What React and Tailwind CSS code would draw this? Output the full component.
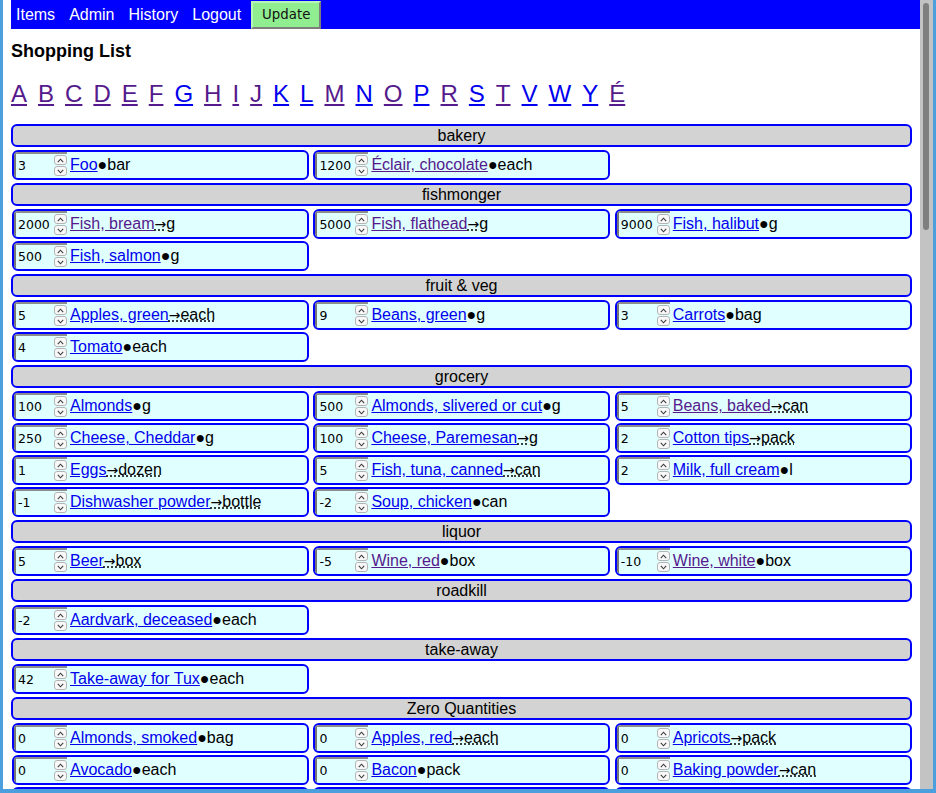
const sections = [
  {
    name: 'bakery',
    items: [
      { q: '3', name: 'Foo', unit: 'bar', arrow: false, visited: false },
      { q: '1200', name: 'Éclair, chocolate', unit: 'each', arrow: false, visited: true },
    ],
  },
  {
    name: 'fishmonger',
    items: [
      { q: '2000', name: 'Fish, bream', unit: 'g', arrow: true, visited: true },
      { q: '5000', name: 'Fish, flathead', unit: 'g', arrow: true, visited: true },
      { q: '9000', name: 'Fish, halibut', unit: 'g', arrow: false, visited: false },
      { q: '500', name: 'Fish, salmon', unit: 'g', arrow: false, visited: false },
    ],
  },
  {
    name: 'fruit & veg',
    items: [
      { q: '5', name: 'Apples, green', unit: 'each', arrow: true, visited: false },
      { q: '9', name: 'Beans, green', unit: 'g', arrow: false, visited: false },
      { q: '3', name: 'Carrots', unit: 'bag', arrow: false, visited: false },
      { q: '4', name: 'Tomato', unit: 'each', arrow: false, visited: false },
    ],
  },
  {
    name: 'grocery',
    items: [
      { q: '100', name: 'Almonds', unit: 'g', arrow: false, visited: false },
      { q: '500', name: 'Almonds, slivered or cut', unit: 'g', arrow: false, visited: false },
      { q: '5', name: 'Beans, baked', unit: 'can', arrow: true, visited: true },
      { q: '250', name: 'Cheese, Cheddar', unit: 'g', arrow: false, visited: false },
      { q: '100', name: 'Cheese, Paremesan', unit: 'g', arrow: true, visited: false },
      { q: '2', name: 'Cotton tips', unit: 'pack', arrow: true, visited: false },
      { q: '1', name: 'Eggs', unit: 'dozen', arrow: true, visited: false },
      { q: '5', name: 'Fish, tuna, canned', unit: 'can', arrow: true, visited: false },
      { q: '2', name: 'Milk, full cream', unit: 'l', arrow: false, visited: false },
      { q: '-1', name: 'Dishwasher powder', unit: 'bottle', arrow: true, visited: false },
      { q: '-2', name: 'Soup, chicken', unit: 'can', arrow: false, visited: false },
    ],
  },
  {
    name: 'liquor',
    items: [
      { q: '5', name: 'Beer', unit: 'box', arrow: true, visited: false },
      { q: '-5', name: 'Wine, red', unit: 'box', arrow: false, visited: true },
      { q: '-10', name: 'Wine, white', unit: 'box', arrow: false, visited: true },
    ],
  },
  {
    name: 'roadkill',
    items: [{ q: '-2', name: 'Aardvark, deceased', unit: 'each', arrow: false, visited: false }],
  },
  {
    name: 'take-away',
    items: [{ q: '42', name: 'Take-away for Tux', unit: 'each', arrow: false, visited: false }],
  },
  {
    name: 'Zero Quantities',
    items: [
      { q: '0', name: 'Almonds, smoked', unit: 'bag', arrow: false, visited: false },
      { q: '0', name: 'Apples, red', unit: 'each', arrow: true, visited: false },
      { q: '0', name: 'Apricots', unit: 'pack', arrow: true, visited: false },
      { q: '0', name: 'Avocado', unit: 'each', arrow: false, visited: false },
      { q: '0', name: 'Bacon', unit: 'pack', arrow: false, visited: false },
      { q: '0', name: 'Baking powder', unit: 'can', arrow: true, visited: false },
      { q: '0', name: 'Bananas', unit: 'each', arrow: false, visited: false },
      { q: '0', name: 'Basil', unit: 'bunch', arrow: false, visited: false },
      { q: '0', name: 'Bay leaves', unit: 'pack', arrow: true, visited: false },
    ],
  },
];

// visited letters show in purple
const letters = [
  ['A', true], ['B', true], ['C', true], ['D', true], ['E', true], ['F', true],
  ['G', false], ['H', true], ['I', true], ['J', true], ['K', false], ['L', false],
  ['M', true], ['N', false], ['O', true], ['P', false], ['R', true], ['S', false],
  ['T', true], ['V', false], ['W', false], ['Y', false], ['É', true],
];

function Spinner() {
  return (
    <div className="flex flex-col w-[13px] h-full gap-[1px] py-[1px]">
      <div className="flex-1 flex items-center justify-center rounded-[3px] border border-[#b4b4b4] bg-[#f8f8f8]">
        <svg width="7" height="5" viewBox="0 0 7 5">
          <path d="M0.8 4.2 L3.5 1.2 L6.2 4.2" fill="none" stroke="#3a3a3a" strokeWidth="1.1" />
        </svg>
      </div>
      <div className="flex-1 flex items-center justify-center rounded-[3px] border border-[#b4b4b4] bg-[#f8f8f8]">
        <svg width="7" height="5" viewBox="0 0 7 5">
          <path d="M0.8 0.8 L3.5 3.8 L6.2 0.8" fill="none" stroke="#3a3a3a" strokeWidth="1.1" />
        </svg>
      </div>
    </div>
  );
}

function Item({ item }) {
  return (
    <div className="flex items-center h-[30px] border-2 border-[#0000ff] rounded-[6px] bg-[#e0ffff] whitespace-nowrap overflow-hidden text-[16px] text-black">
      <div className="flex self-start h-[25px] w-[53px] border-l-2 border-t-2 border-l-[#767676] border-t-[#8c8c8c]">
        <span className="flex-1 pl-[2px] leading-[23px] text-[12.5px] font-['DejaVu_Sans',sans-serif] text-black">
          {item.q}
        </span>
        <Spinner />
      </div>
      <a
        href="#"
        className={`ml-[3px] underline ${item.visited ? 'text-[#551a8b]' : 'text-[#0000ee]'}`}
      >
        {item.name}
      </a>
      {item.arrow ? (
        <abbr title={item.unit} className="no-underline">
          <span className="underline decoration-dotted decoration-black">
            <span className="font-['DejaVu_Sans',sans-serif] text-[14px]">→</span>
            {item.unit}
          </span>
        </abbr>
      ) : (
        <span>●{item.unit}</span>
      )}
    </div>
  );
}

function Section({ section }) {
  return (
    <div>
      <div className="h-[23px] border-2 border-[#0000ff] rounded-[6px] bg-[#d3d3d3] text-center text-[16px] leading-[19px] text-black">
        {section.name}
      </div>
      <div className="grid grid-cols-[repeat(3,297px)] gap-x-[4.4px] gap-y-[2px] mt-[3px] pl-[1px]">
        {section.items.map((item) => (
          <Item key={item.name} item={item} />
        ))}
      </div>
    </div>
  );
}

export default function App() {
  return (
    <div className="w-[936px] h-[793px] flex flex-col bg-[#4a9fdc] font-['Liberation_Sans',Arial,sans-serif]">
      <div className="flex flex-1 min-h-0 mx-[3px]">
        <div className="flex-1 bg-white overflow-hidden px-[8px]">
          {/* nav */}
          <nav className="h-[29px] bg-[#0000ff] mr-[-8px] flex items-center text-white text-[16px]">
            <div className="flex items-center gap-[14px] ml-[5px]">
              <a href="#">Items</a>
              <a href="#">Admin</a>
              <a href="#">History</a>
              <a href="#">Logout</a>
            </div>
            <button className="ml-[10px] mt-[1px] h-[28px] w-[70px] bg-[#90ee90] border-2 border-t-[#b8f5b8] border-l-[#b8f5b8] border-r-[#7d7d7d] border-b-[#7d7d7d] text-[13.33px] text-[#111] font-['DejaVu_Sans',sans-serif]">
              Update
            </button>
          </nav>

          <h1 className="mt-[12px] text-[18px] leading-[21px] font-bold text-black">Shopping List</h1>

          <div className="mt-[18px] flex gap-x-[11px] text-[24px] leading-[28px]">
            {letters.map(([l, visited]) => (
              <a
                key={l}
                href="#"
                className={`underline ${visited ? 'text-[#551a8b]' : 'text-[#0000ee]'}`}
              >
                {l}
              </a>
            ))}
          </div>

          <div className="mt-[16px] flex flex-col gap-[3px]">
            {sections.map((s) => (
              <Section key={s.name} section={s} />
            ))}
          </div>
        </div>

        {/* scrollbar */}
        <div className="w-[13px] bg-[#c3c3c3] pt-[3px] pl-[3px]">
          <div className="w-[6px] h-[227px] rounded-[3px] bg-[#7f7f7f]" />
        </div>
      </div>
      <div className="h-[4px]" />
    </div>
  );
}
